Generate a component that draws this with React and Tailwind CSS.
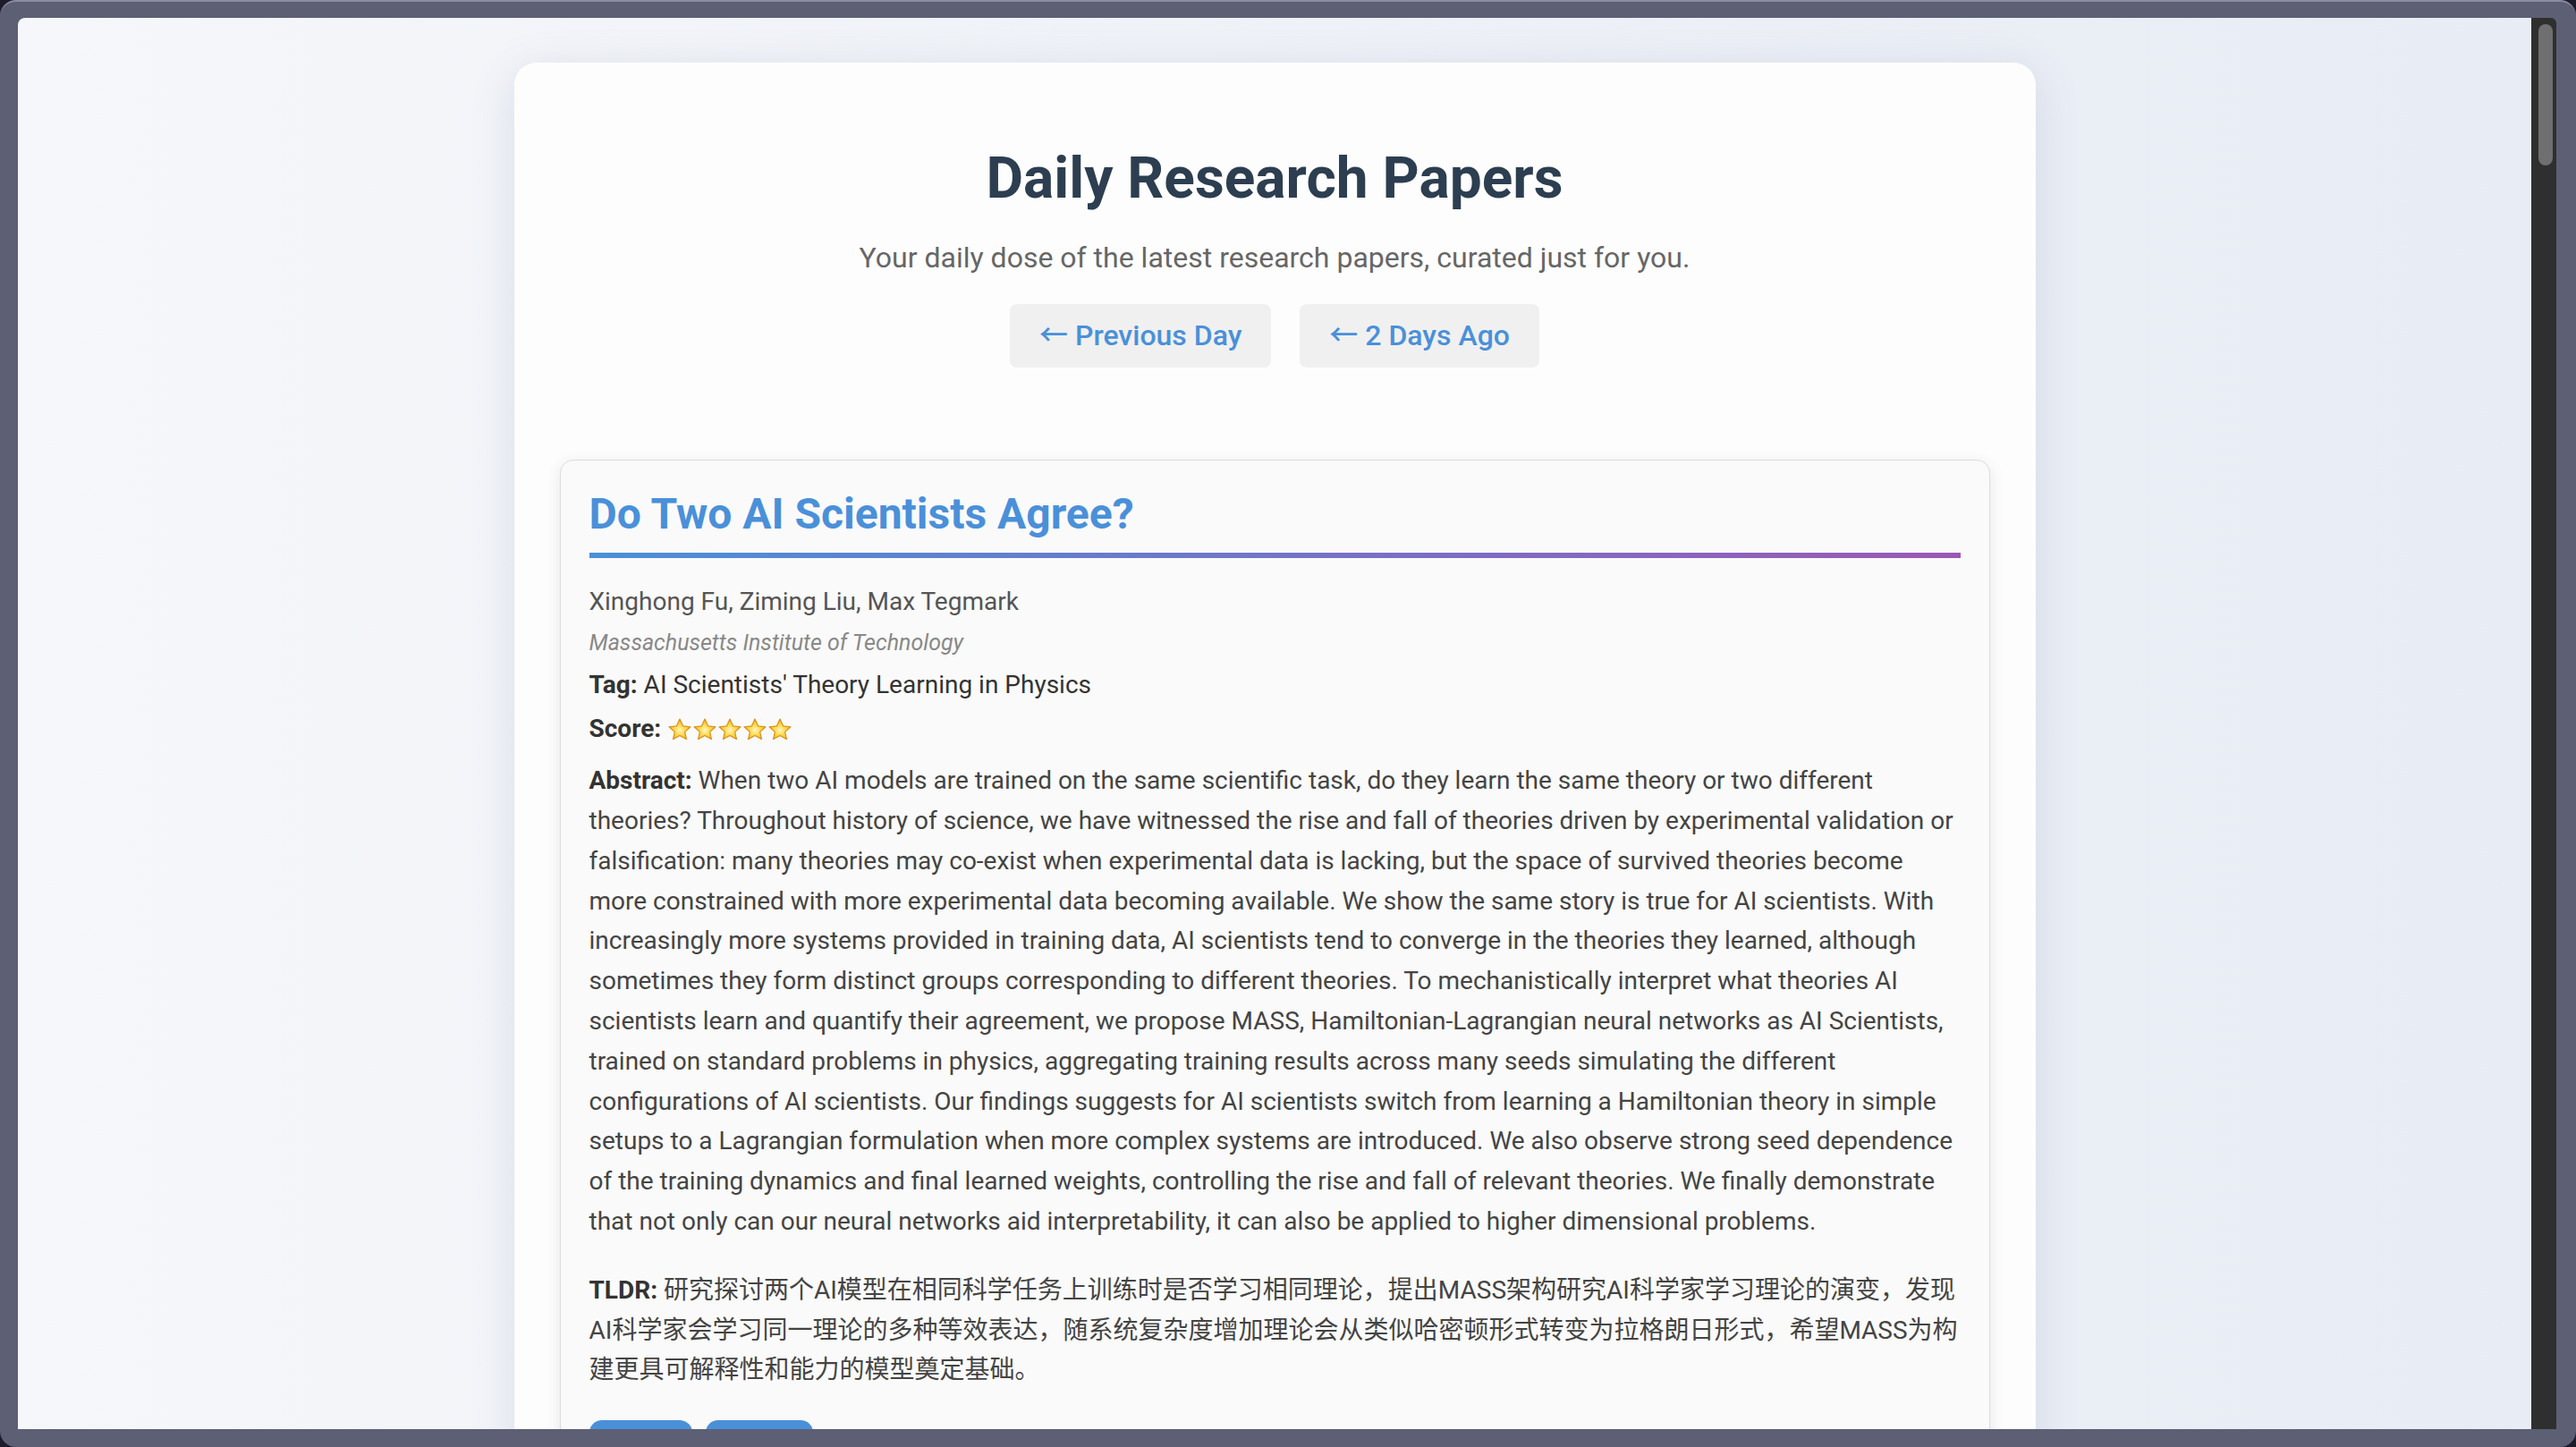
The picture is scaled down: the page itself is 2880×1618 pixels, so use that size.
const abstract =
  "When two AI models are trained on the same scientific task, do they learn the same theory or two different theories? Throughout history of science, we have witnessed the rise and fall of theories driven by experimental validation or falsification: many theories may co-exist when experimental data is lacking, but the space of survived theories become more constrained with more experimental data becoming available. We show the same story is true for AI scientists. With increasingly more systems provided in training data, AI scientists tend to converge in the theories they learned, although sometimes they form distinct groups corresponding to different theories. To mechanistically interpret what theories AI scientists learn and quantify their agreement, we propose MASS, Hamiltonian-Lagrangian neural networks as AI Scientists, trained on standard problems in physics, aggregating training results across many seeds simulating the different configurations of AI scientists. Our findings suggests for AI scientists switch from learning a Hamiltonian theory in simple setups to a Lagrangian formulation when more complex systems are introduced. We also observe strong seed dependence of the training dynamics and final learned weights, controlling the rise and fall of relevant theories. We finally demonstrate that not only can our neural networks aid interpretability, it can also be applied to higher dimensional problems."

const tldr =
  "研究探讨两个AI模型在相同科学任务上训练时是否学习相同理论，提出MASS架构研究AI科学家学习理论的演变，发现AI科学家会学习同一理论的多种等效表达，随系统复杂度增加理论会从类似哈密顿形式转变为拉格朗日形式，希望MASS为构建更具可解释性和能力的模型奠定基础。"

const Star = ({ id }) => (
  <svg width="28" height="28" viewBox="0 0 24 24" className="inline-block align-[-6px]">
    <defs>
      <radialGradient id={id} cx="0.5" cy="0.55" r="0.6">
        <stop offset="0%" stopColor="#fff6c2" />
        <stop offset="45%" stopColor="#ffd84a" />
        <stop offset="100%" stopColor="#f4a41f" />
      </radialGradient>
    </defs>
    <path
      d="M12 1.8l3.05 6.6 7.15.8-5.35 4.85 1.5 7.05L12 17.5l-6.35 3.6 1.5-7.05L1.8 9.2l7.15-.8z"
      fill={`url(#${id})`}
      stroke="#d98e16"
      strokeWidth="1"
      strokeLinejoin="round"
    />
  </svg>
)

const PaperCard = () => (
  <div className="mt-[103px] bg-[#fafafa] border border-[#dcdcdc] rounded-[15px] px-[32px] pt-[31px] pb-[40px] shadow-[0_4px_18px_rgba(0,0,0,0.09)]">
    <h2 className="text-[48px] leading-[1.2] font-bold text-[#4a90d9]">Do Two AI Scientists Agree?</h2>
    <div className="mt-[14px] h-[6px] bg-[linear-gradient(90deg,#4a90d9,#9b59b6)]"></div>
    <p className="mt-[27px] text-[28px] leading-[1.6] text-[#555]">Xinghong Fu, Ziming Liu, Max Tegmark</p>
    <p className="mt-[3px] text-[25px] leading-[1.6] italic text-[#888]">Massachusetts Institute of Technology</p>
    <p className="mt-[5px] text-[28px] leading-[1.6] text-[#333]">
      <strong>Tag:</strong> AI Scientists' Theory Learning in Physics
    </p>
    <p className="mt-[5px] text-[28px] leading-[1.6] text-[#333]">
      <strong>Score:</strong>{" "}
      {[0, 1, 2, 3, 4].map((i) => (
        <Star key={i} id={`star-${i}`} />
      ))}
    </p>
    <p className="mt-[13px] text-[28px] leading-[1.6] text-[#444]">
      <strong className="text-[#333]">Abstract:</strong> {abstract}
    </p>
    <p className="mt-[32px] text-[28px] leading-[1.6] text-[#444]">
      <strong className="text-[#333]">TLDR:</strong> {tldr}
    </p>
    <div className="mt-[33px] flex gap-[15px]">
      <a className="w-[115px] rounded-[14px] bg-[#4a90d9] py-[16px] text-center text-[26px] text-white">PDF</a>
      <a className="w-[120px] rounded-[14px] bg-[#4a90d9] py-[16px] text-center text-[26px] text-white">Code</a>
    </div>
  </div>
)

export default function App() {
  return (
    <div className="w-[2880px] h-[1618px] bg-[#1c1c2a] font-['Roboto','Noto_Sans_CJK_SC',sans-serif]">
      <div className="w-full h-full rounded-[18px] bg-[#5d5f75] border-t-[2px] border-[#8a8ca3] flex pt-[18px] pl-[20px] pr-[22px] pb-[20px]">
        <div className="flex-1 rounded-tl-[8px] overflow-hidden bg-[linear-gradient(90deg,#f5f7fa_0%,#e8ecf4_100%)]">
          <div className="pt-[50px] flex justify-center">
            <div className="w-[1701px] bg-[#fdfdfe] rounded-[25px] px-[51px] pt-[92px] shadow-[0_10px_50px_rgba(90,100,150,0.16)]">
              <h1 className="text-center text-[64px] leading-[1.2] font-bold text-[#2c3e50]">Daily Research Papers</h1>
              <p className="mt-[30px] text-center text-[32px] leading-[1.2] text-[#666]">
                Your daily dose of the latest research papers, curated just for you.
              </p>
              <div className="mt-[33px] flex justify-center gap-[32px]">
                <button className="rounded-[8px] bg-[#f0f0f0] px-[33px] pt-[15px] pb-[15px] text-[32px] leading-[41px] font-medium text-[#4a90d9]">
                  ← Previous Day
                </button>
                <button className="rounded-[8px] bg-[#f0f0f0] px-[33px] pt-[15px] pb-[15px] text-[32px] leading-[41px] font-medium text-[#4a90d9]">
                  ← 2 Days Ago
                </button>
              </div>
              <PaperCard />
            </div>
          </div>
        </div>
        <div className="w-[28px] bg-[#2f2f2f] rounded-tr-[6px] pt-[7px] pl-[8px]">
          <div className="w-[16px] h-[158px] rounded-full bg-[#6f6f6f]"></div>
        </div>
      </div>
    </div>
  )
}
